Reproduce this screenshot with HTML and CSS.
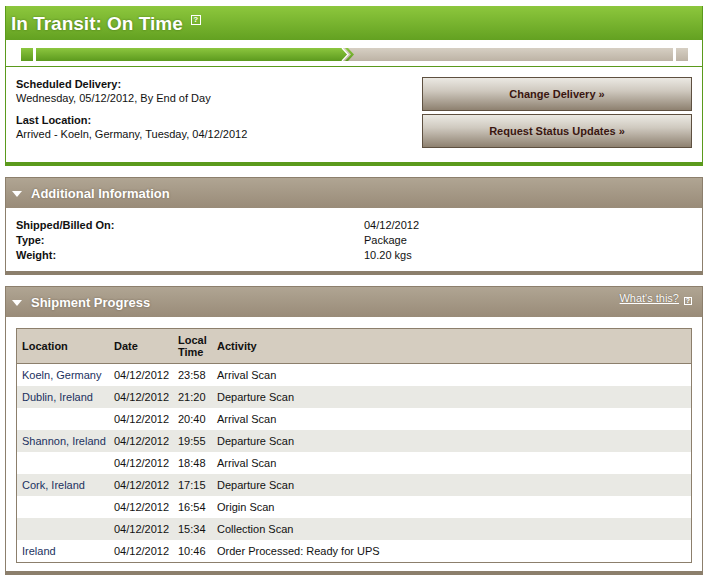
FILE: index.html
```html
<!DOCTYPE html>
<html lang="en">
<head>
    <meta charset="UTF-8">
    <title>Tracking Detail</title>
    <link rel="stylesheet" href="styles.css">
</head>
<body>
    <div class="page">

        <!-- current status -->
        <div class="status-box">
            <div class="status-head">
                <h1 class="status-title">In Transit: On Time</h1>
                <span class="help-icon">?</span>
            </div>

            <div class="progress">
                <div class="track">
                    <span class="seg seg-done seg-small"></span>
                    <span class="seg seg-done seg-fill"></span>
                    <svg class="chevron" width="16" height="13" viewBox="0 0 16 13">
                        <defs>
                            <linearGradient id="g" x1="0" y1="0" x2="0" y2="1">
                                <stop offset="0" stop-color="#8cc63f"/>
                                <stop offset="1" stop-color="#5c9a1e"/>
                            </linearGradient>
                            <linearGradient id="t" x1="0" y1="0" x2="0" y2="1">
                                <stop offset="0" stop-color="#d6cfc3"/>
                                <stop offset="1" stop-color="#bdb3a5"/>
                            </linearGradient>
                        </defs>
                        <rect width="16" height="13" fill="url(#t)"/>
                        <polygon points="0,0 3,0 9,6.5 3,13 0,13" fill="url(#g)"/>
                        <polyline points="3,0 9,6.5 3,13" fill="none" stroke="#fff" stroke-width="1.3"/>
                        <polygon points="6,0 9,0 15,6.5 9,13 6,13 12,6.5" fill="url(#g)"/>
                    </svg>
                    <span class="seg seg-todo seg-fill"></span>
                    <span class="seg seg-todo seg-small"></span>
                </div>
            </div>

            <div class="status-body">
                <div class="status-info">
                    <div class="info-block">
                        <strong>Scheduled Delivery:</strong>
                        <div>Wednesday, 05/12/2012, By End of Day</div>
                    </div>
                    <div class="info-block">
                        <strong>Last Location:</strong>
                        <div>Arrived - Koeln, Germany, Tuesday, 04/12/2012</div>
                    </div>
                </div>
                <div class="status-actions">
                    <button class="action-btn">Change Delivery &raquo;</button>
                    <button class="action-btn">Request Status Updates &raquo;</button>
                </div>
            </div>
        </div>

        <!-- additional information -->
        <div class="panel">
            <div class="panel-head">
                <span class="toggle"></span>
                <h2 class="panel-title">Additional Information</h2>
            </div>
            <div class="details">
                <strong>Shipped/Billed On:</strong><span>04/12/2012</span>
                <strong>Type:</strong><span>Package</span>
                <strong>Weight:</strong><span>10.20 kgs</span>
            </div>
        </div>

        <!-- shipment progress -->
        <div class="panel">
            <div class="panel-head">
                <span class="toggle"></span>
                <h2 class="panel-title">Shipment Progress</h2>
                <a href="#" class="whats-this">What's this?</a>
                <span class="help-icon help-small">?</span>
            </div>
            <div class="progress-wrap">
                <table class="scans">
                    <thead>
                        <tr>
                            <th class="col-loc">Location</th>
                            <th class="col-date">Date</th>
                            <th class="col-time">Local Time</th>
                            <th>Activity</th>
                        </tr>
                    </thead>
                    <tbody>
                        <tr><td class="loc">Koeln, Germany</td><td>04/12/2012</td><td>23:58</td><td>Arrival Scan</td></tr>
                        <tr><td class="loc">Dublin, Ireland</td><td>04/12/2012</td><td>21:20</td><td>Departure Scan</td></tr>
                        <tr><td class="loc"></td><td>04/12/2012</td><td>20:40</td><td>Arrival Scan</td></tr>
                        <tr><td class="loc">Shannon, Ireland</td><td>04/12/2012</td><td>19:55</td><td>Departure Scan</td></tr>
                        <tr><td class="loc"></td><td>04/12/2012</td><td>18:48</td><td>Arrival Scan</td></tr>
                        <tr><td class="loc">Cork, Ireland</td><td>04/12/2012</td><td>17:15</td><td>Departure Scan</td></tr>
                        <tr><td class="loc"></td><td>04/12/2012</td><td>16:54</td><td>Origin Scan</td></tr>
                        <tr><td class="loc"></td><td>04/12/2012</td><td>15:34</td><td>Collection Scan</td></tr>
                        <tr><td class="loc">Ireland</td><td>04/12/2012</td><td>10:46</td><td>Order Processed: Ready for UPS</td></tr>
                    </tbody>
                </table>
            </div>
        </div>

    </div>
</body>
</html>
```

FILE: styles.css
```css
:root {
    --green: #5b9a1c;
    --green-light: #8cc63f;
    --tan: #8c7f6c;
    --tan-light: #b0a593;
    --tan-dark: #998b78;
    --text: #111;
    --link: #1b3160;
}

body {
    margin: 0;
    font-family: "Liberation Sans", Arial, sans-serif;
    font-size: 11px;
    color: var(--text);
    background: #fff;
}

.page {
    padding: 6px 6px 0 5px;
}

/* status box */
.status-box {
    border: 1px solid var(--green);
    border-top: none;
    border-bottom: 4px solid var(--green);
}

.status-head {
    display: flex;
    align-items: flex-start;
    height: 34px;
    padding-left: 5px;
    background: linear-gradient(#8dc73d, #63a121);
}

.status-title {
    margin: 0;
    font-size: 19px;
    line-height: 36px;
    color: #fff;
    text-shadow: 0 0 2px rgba(40, 70, 10, 0.6);
}

.help-icon {
    display: inline-block;
    box-sizing: border-box;
    width: 10px;
    height: 10px;
    margin: 9px 0 0 8px;
    border: 1px solid #fff;
    color: #fff;
    font-size: 8px;
    font-weight: bold;
    line-height: 8px;
    text-align: center;
}

.progress {
    padding: 8px 14px 5px 15px;
    border-bottom: 1px solid var(--green);
}

.track {
    display: flex;
    height: 13px;
}

.seg {
    display: block;
    height: 13px;
}

.seg-small {
    width: 12px;
    flex: none;
}

.seg-done {
    background: linear-gradient(var(--green-light), #5c9a1e);
}

.seg-done.seg-small {
    margin-right: 3px;
}

.seg-done.seg-fill {
    width: 303px;
    flex: none;
}

.seg-todo {
    background: linear-gradient(#d6cfc3, #bdb3a5);
}

.seg-todo.seg-fill {
    flex: 1;
    margin-right: 3px;
}

.chevron {
    display: block;
    flex: none;
}

.status-body {
    display: flex;
    justify-content: space-between;
    padding: 10px 10px 13px 10px;
}

.status-info {
    line-height: 14px;
}

.info-block {
    margin-bottom: 8px;
}

.status-actions {
    display: flex;
    flex-direction: column;
    gap: 3px;
}

.action-btn {
    width: 270px;
    height: 34px;
    border: 1px solid #5e5040;
    background: linear-gradient(#ebe9e3, #cfc9bf 40%, #8e8170);
    color: #3a1610;
    font-family: "Liberation Sans", Arial, sans-serif;
    font-size: 11px;
    font-weight: bold;
    cursor: pointer;
}

/* collapsible panels */
.panel {
    margin-top: 11px;
    border: 1px solid var(--tan);
    border-bottom: 4px solid var(--tan);
}

.panel-head {
    display: flex;
    align-items: center;
    height: 30px;
    padding: 0 10px 0 6px;
    background: linear-gradient(var(--tan-light), var(--tan-dark));
}

.toggle {
    width: 0;
    height: 0;
    margin: 2px 9px 0 0;
    border-left: 5px solid transparent;
    border-right: 5px solid transparent;
    border-top: 6px solid #fff;
}

.panel-title {
    margin: 0;
    flex: 1;
    font-size: 13px;
    color: #fff;
    text-shadow: 0 0 2px rgba(60, 45, 30, 0.5);
}

.whats-this {
    align-self: flex-start;
    margin-top: 5px;
    color: #fff;
    font-size: 11px;
    text-shadow: 0 0 1px rgba(60, 45, 30, 0.8);
}

.help-small {
    align-self: flex-start;
    width: 8px;
    height: 8px;
    margin: 10px 0 0 5px;
    font-size: 7px;
    line-height: 6px;
}

.details {
    display: grid;
    grid-template-columns: 348px auto;
    padding: 10px 10px 8px;
    line-height: 15px;
}

/* scan history table */
.progress-wrap {
    padding: 11px 10px 8px;
}

.scans {
    width: 100%;
    table-layout: fixed;
    border-collapse: collapse;
    border: 1px solid var(--tan);
}

.scans th {
    height: 34px;
    padding: 0 5px;
    background: #d5cdc0;
    border-bottom: 1px solid var(--tan);
    text-align: left;
    line-height: 12px;
}

.col-loc { width: 82px; }
.col-date { width: 54px; }
.col-time { width: 29px; }

.scans td {
    height: 22px;
    padding: 0 5px;
    white-space: nowrap;
}

.scans tbody tr:nth-child(even) td {
    background: #e9e9e4;
}

.scans .loc {
    color: var(--link);
}
```
